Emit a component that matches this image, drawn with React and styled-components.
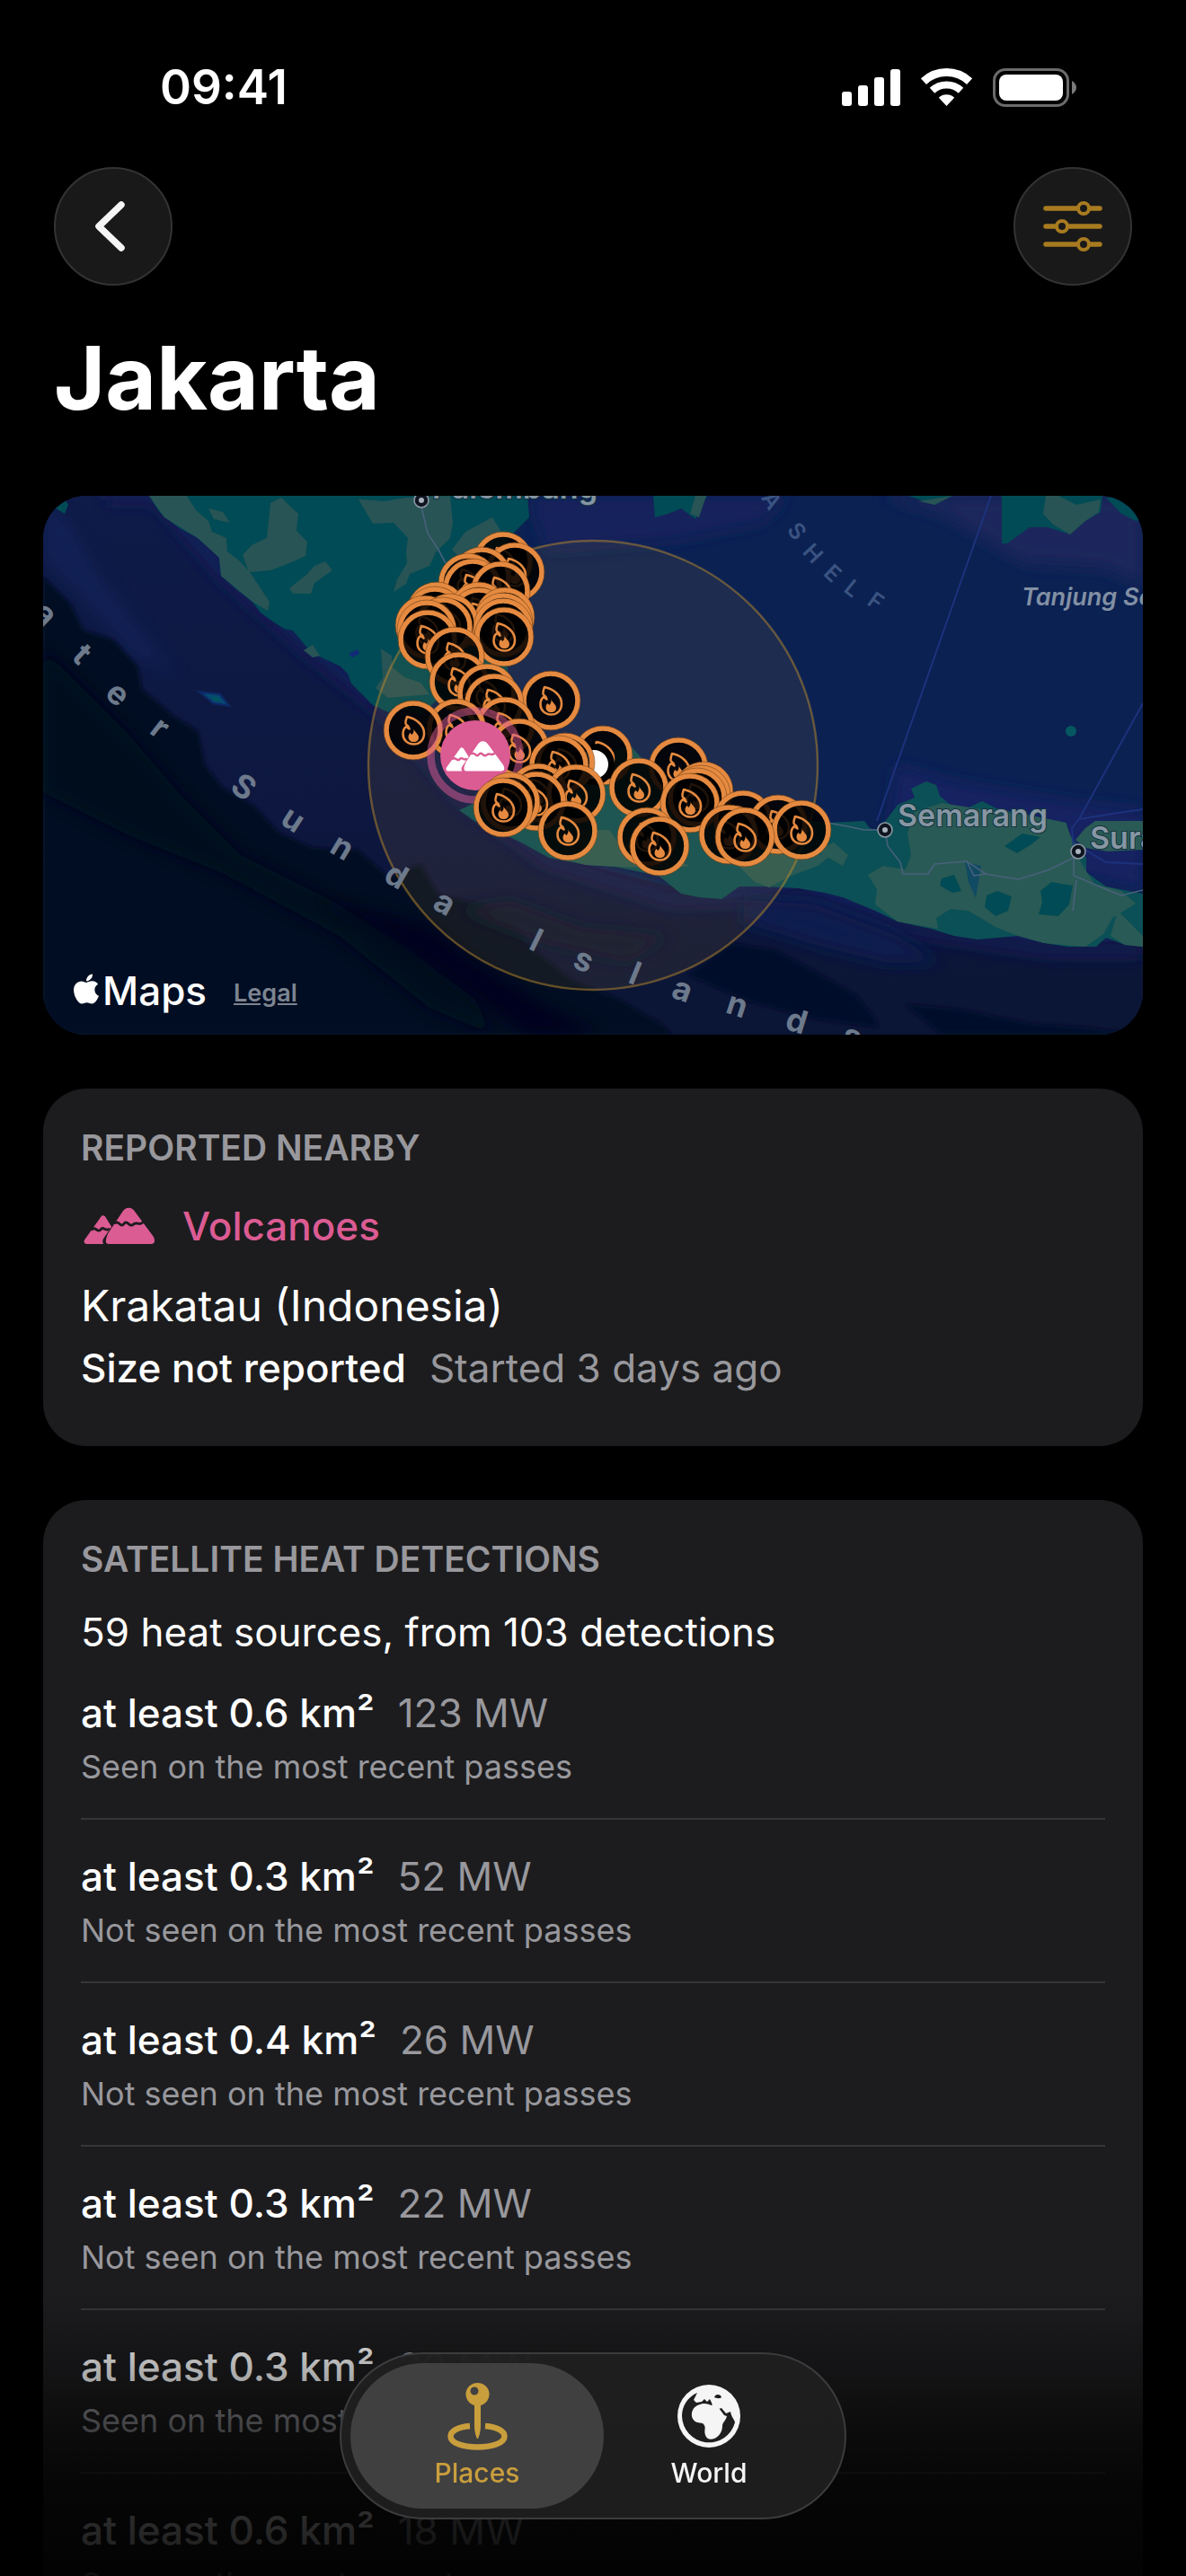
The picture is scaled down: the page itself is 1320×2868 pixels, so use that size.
import { useState } from 'react'
import styled, { createGlobalStyle } from 'styled-components'
import { FaApple } from 'react-icons/fa'

const detections = [
    { id: 1, area: '0.6', power: 123, recent: true },
    { id: 2, area: '0.3', power: 52, recent: false },
    { id: 3, area: '0.4', power: 26, recent: false },
    { id: 4, area: '0.3', power: 22, recent: false },
    { id: 5, area: '0.3', power: 20, recent: true },
    { id: 6, area: '0.6', power: 18, recent: true },
]

// heat sources on the map, north to south, split where the volcano and the centre dot sit
const firesNorth = [
    [512, 73], [525, 85], [488, 90], [473, 97], [478, 103], [509, 106],
    [438, 129], [485, 129], [436, 134], [485, 135], [514, 135], [512, 141], [452, 142],
    [425, 144], [445, 146], [512, 147], [427, 149], [513, 157], [428, 160],
    [458, 179], [463, 207], [494, 220], [565, 228], [502, 231],
    [514, 257], [460, 259], [412, 261], [530, 281], [623, 289],
]

const firesSouth = [
    [581, 297], [574, 300], [707, 302], [663, 325], [735, 329], [551, 331], [732, 333],
    [593, 332], [728, 336], [549, 340], [520, 341], [720, 342], [512, 347],
    [779, 361], [818, 366], [844, 372], [584, 373], [763, 377], [781, 380],
    [672, 380], [686, 390],
]

// x, y, rotation
const islandLetters = [
    ['a', 1, 133, 44], ['t', 42, 178, 43], ['e', 82, 222, 42], ['r', 129, 260, 38],
    ['S', 222, 326, 35], ['u', 277, 362, 33], ['n', 332, 393, 31], ['d', 392, 425, 30], ['a', 446, 455, 29],
    ['I', 548, 497, 26], ['s', 601, 519, 24], ['l', 658, 534, 22], ['a', 711, 552, 20], ['n', 772, 569, 18],
    ['d', 838, 587, 17], ['s', 900, 604, 15],
]

const shelfLetters = [
    ['A', 811, 5, 58], ['S', 839, 39, 52], ['H', 857, 64, 47], ['E', 879, 86, 43], ['L', 901, 103, 39], ['F', 927, 117, 35],
]

const Volcano = ({ cut }) => (
    <svg viewBox='0 0 66 34' aria-hidden='true'>
        <g fill='currentColor' stroke='currentColor' strokeWidth='5' strokeLinejoin='round'>
            <path d='M3 31 L18 10 L31 31Z' />
            <path d='M22 31 L41 3 L63 31Z' stroke={cut} strokeWidth='9' />
            <path d='M23 31 C23 28 24 26 26 23 L38 5 C40 2 43 2 45 5 L62 28 C63 30 63 31 62 31Z' />
        </g>
        <rect y='34' width='66' height='8' fill={cut} />
        <g fill='none' stroke={cut} strokeWidth='2.4' strokeLinecap='round' strokeLinejoin='round'>
            <path d='M8 20 C11 17 13 24 16 20 C18 17 20 22 23 20' />
            <path d='M29 14 C33 12 34 19 37 15 C40 11 42 18 45 16 C49 12 50 17 54 14' />
        </g>
    </svg>
)

const Fire = ({ x, y }) => (
    <g transform={`translate(${x} ${y})`}>
        <circle r='30' fill='#000' fillOpacity='.86' stroke='#e58a40' strokeWidth='5.6' />
        <circle r='33' fill='none' stroke='#7a4417' strokeWidth='.6' />
        <path
            d='M-7 -15 C3 -13 12 -6 12 3.5 C12 11 7 15.5 .5 15.5 C-7 15.5 -11.5 10.5 -11.5 4 C-11.5 1 -10.5 -2 -8 -4 L-4.5 -1.5 C-5 -4 -5.5 -5 -8 -6.5 C-9.5 -8 -8 -12 -7 -15Z'
            fill='none'
            stroke='#e58a40'
            strokeWidth='2.6'
            strokeLinejoin='round'
        />
        <path
            d='M.5 -2 C1 2 6 4 6 8 C6 11 4 13 .5 13 C-3 13 -5.5 11 -5.5 7.5 C-5.5 5.5 -4.5 4 -3.5 3 L-1.5 5 C0 3 1 1 .5 -2Z'
            fill='#e58a40'
        />
    </g>
)

const City = ({ x, y }) => (
    <g transform={`translate(${x} ${y})`}>
        <circle r='8' fill='#10161f' stroke='#8b97a5' strokeWidth='1.6' />
        <circle r='3' fill='#a9b4c0' />
    </g>
)

const RegionMap = () => (
    <svg viewBox='0 0 1224 600' preserveAspectRatio='xMidYMid slice' role='img' aria-label='Map of the Jakarta region'>
        <defs>
            <filter id='soft' x='-20%' y='-20%' width='140%' height='140%'>
                <feGaussianBlur stdDeviation='9' />
            </filter>
            <filter id='edge'>
                <feGaussianBlur stdDeviation='2' />
            </filter>
            <linearGradient id='south' x1='0' y1='0' x2='0' y2='1'>
                <stop offset='0' stopColor='#0f1b48' />
                <stop offset='.6' stopColor='#0d173f' />
                <stop offset='1' stopColor='#0b1534' />
            </linearGradient>
        </defs>
        <rect width='1224' height='600' fill='#0b2152' />
        <g filter='url(#soft)'>
            <path d='M540 0 L830 0 L800 30 L700 50 L560 60Z' fill='#14205c' />
            <path d='M930 0 L1224 0 L1224 100 L1180 80 L1090 75 L1000 20Z' fill='#1b255c' />
            <path d='M950 300 L1020 320 L1140 340 L1224 350 L1224 440 L940 370Z' fill='#122362' />
        </g>
        {/* Indian Ocean */}
        <path d='M0 0 L118 0 L198 89 L298 174 L384 241 L480 300 L480 360 L604 411 L755 449 L841 437 L951 474 L1114 498 L1224 495 L1224 600 L0 600Z' fill='url(#south)' />
        <path
            d='M70 0 L125 0 L205 92 L300 176 L384 243 L470 340 L560 405 L700 450 L850 445 L960 482 L1120 505 L1224 505'
            fill='none'
            stroke='#121e58'
            strokeWidth='14'
            filter='url(#soft)'
        />
        <path d='M0 0 L30 30 L60 85 L110 150 L150 200 L100 180 L40 110 L0 70Z' fill='#14296a' opacity='.4' filter='url(#soft)' />
        <path d='M780 450 L860 455 L950 490 L1000 520 L940 520 L860 500 L780 475Z' fill='#0e1f50' filter='url(#soft)' />
        <path
            d='M0 90 L30 120 L45 150 L78 160 L105 190 L110 215 L145 245 L172 262 L180 300 L200 325 L235 345 L262 375 L300 392 L350 394 L385 425 L420 410 L440 445 L490 455 L520 470 L545 505 L590 540 L640 560 L690 590 L700 600 L0 600Z'
            fill='#000c23'
            filter='url(#edge)'
        />
        <path d='M0 170 L90 260 L150 330 L220 400 L320 450 L400 500 L480 560 L500 600 L430 570 L330 490 L200 420 L100 380 L0 330Z' fill='#010d1c' filter='url(#soft)' />
        <path d='M300 450 L360 462 L430 480 L480 520 L560 570 L620 600 L540 600 L430 520 L360 475Z' fill='#01031c' filter='url(#soft)' />
        <path d='M718 534 L745 512 L767 498 L816 506 L860 530 L881 542 L905 556 L926 582 L930 592 L857 582 L783 562Z' fill='#000c2a' filter='url(#edge)' />
        <path d='M959 566 L1020 572 L1100 588 L1160 592 L1224 600 L1000 600Z' fill='#010e2b' filter='url(#edge)' />
        <path d='M460 460 L520 450 L600 480 L700 490 L650 520 L560 500Z' fill='#0a1530' filter='url(#soft)' />

        {/* Sumatra */}
        <path
            d='M118 0 L128 16 L135 24 L152 36 L172 47 L188 60 L196 69 L198 89 L215 104 L233 118 L242 130 L253 138 L268 148 L278 150 L288 162 L298 174 L314 182 L331 190 L339 198 L343 209 L356 222 L367 233 L384 241 L400 236 L420 244 L441 225 L460 250 L482 241 L510 235 L518 209 L516 178 L526 140 L530 107 L522 80 L518 47 L541 24 L539 0Z'
            fill='#004b55'
        />
        <g fill='#285455'>
            <path d='M118 0 L160 0 L170 16 L184 28 L188 40 L204 47 L205 62 L218 72 L230 85 L240 100 L252 118 L250 128 L233 118 L198 89 L196 69 L172 47 L135 24Z' />
            <path d='M253 8 L265 2 L284 20 L282 39 L294 51 L292 67 L274 75 L253 83 L229 85 L222 66 L232 55 L249 47Z' />
            <path d='M184 14 L200 18 L208 30 L190 26Z' />
            <path d='M274 103 L294 87 L302 78 L314 73 L322 83 L302 97 L298 109 L278 109Z' />
            <path d='M351 4 L380 6 L404 2 L453 0 L456 30 L453 47 L437 63 L430 78 L408 87 L404 98 L390 107 L394 93 L405 75 L404 63 L406 47 L390 30 L367 31Z' />
            <path d='M470 40 L500 24 L516 50 L500 80 L470 75 L455 60Z' />
            <path d='M376 170 L388 178 L388 190 L402 202 L420 208 L430 221 L384 225 L370 214 L378 202Z' />
            <path d='M290 172 L300 166 L308 178 L300 180Z' />
        </g>
        <path d='M12 4 L24 3 L28 10 L24 20 L14 14Z' fill='#004b55' />
        <path d='M178 220 L196 222 L204 232 L190 230Z' fill='#00565c' stroke='#0c3a86' strokeWidth='5' strokeOpacity='.5' />
        <path d='M340 176 L350 171 L352 176 L344 180Z' fill='#122b78' />

        {/* Java, Madura */}
        <path
            d='M463 350 L480 342 L530 330 L600 300 L653 277 L673 300 L720 330 L800 355 L873 364 L914 362 L920 370 L928 372 L939 360 L951 344 L970 336 L966 326 L983 318 L994 322 L998 334 L1012 346 L1030 347 L1045 340 L1061 348 L1100 356 L1139 364 L1142 376 L1147 383 L1161 403 L1161 419 L1183 435 L1224 443 L1224 502 L1204 500 L1183 492 L1172 502 L1140 502 L1114 498 L1085 490 L1040 494 L1014 490 L988 482 L951 474 L926 462 L890 447 L870 442 L841 437 L804 435 L775 435 L755 449 L730 447 L710 443 L685 423 L636 413 L604 411 L563 403 L530 385 L480 362Z'
            fill='#0b5056'
        />
        <path d='M1149 383 L1160 370 L1171 362 L1224 362 L1224 394 L1185 396 L1160 392Z' fill='#2a5a55' />
        <g fill='#2a5a55'>
            <path d='M598 372 L630 372 L640 386 L690 400 L720 412 L700 415 L640 413 L604 411 L570 402Z' />
            <path d='M745 400 L800 395 L840 402 L880 398 L862 412 L830 424 L808 436 L792 430 L770 408Z' />
            <path d='M860 395 L880 386 L896 400 L890 412Z' />
            <path d='M970 352 L1000 342 L1050 350 L1100 356 L1138 364 L1146 385 L1156 410 L1170 432 L1200 440 L1216 454 L1190 470 L1180 488 L1160 502 L1114 498 L1085 490 L1060 480 L1030 462 L1010 460 L994 470 L996 482 L951 474 L926 455 L928 438 L918 422 L935 412 L960 416 L966 400 L962 375Z' />
            <path d='M1196 462 L1224 490 L1224 502 L1204 500 L1188 490Z' />
        </g>
        <g fill='#004b55'>
            <path d='M1000 426 L1014 422 L1022 440 L1012 442 L998 434Z' />
            <path d='M1050 445 L1062 440 L1078 446 L1074 462 L1060 468 L1048 458Z' />
            <path d='M1110 440 L1122 430 L1146 434 L1142 455 L1130 468 L1108 466 L1112 452Z' />
            <path d='M1070 390 L1090 376 L1110 380 L1100 388 L1084 398Z' />
            <path d='M1026 408 L1044 412 L1038 448 L1030 430Z' fill='#104a63' />
        </g>

        {/* Belitung, Borneo */}
        <g fill='#004b55'>
            <path d='M679 0 L681 24 L696 20 L710 14 L726 26 L739 0Z' />
            <path d='M963 0 L992 10 L1012 0Z' />
            <path d='M1067 0 L1067 53 L1073 53 L1098 35 L1118 35 L1143 43 L1160 28 L1177 18 L1179 0Z' />
            <path d='M1183 2 L1200 20 L1216 28 L1224 26 L1224 0Z' />
        </g>
        <g fill='#285455'>
            <path d='M726 0 L720 20 L730 24 L738 0Z' />
            <path d='M1116 0 L1113 20 L1124 32 L1143 43 L1160 28 L1175 18 L1177 4 L1150 10 L1130 0Z' />
            <path d='M975 6 L992 10 L1012 0 L1000 2Z' />
        </g>
        <circle cx='1144' cy='262' r='6' fill='#05585f' />

        <g fill='none' stroke='#1d327c' strokeWidth='2'>
            <path d='M1055 0 L928 362' />
            <path d='M1224 231 L1153 360 L1145 370 L1147 391' />
            <path d='M1153 360 L1190 354 L1224 349' />
            <path d='M1161 395 L1183 408 L1224 410' />
        </g>
        <g fill='none' stroke='#48617c' strokeWidth='1.6'>
            <path d='M421 12 L428 42 L440 60 L448 75' />
            <path d='M873 364 L895 368 L914 372 L937 372 L940 390 L954 408 L957 421 L985 421 L992 410 L1028 407 L1049 421 L1085 427 L1118 417 L1147 403' />
            <path d='M1028 407 L1036 423 L1049 421 M1147 403 L1147 423 L1183 438 L1200 445 L1224 439 M1150 428 L1146 462' />
        </g>

        <circle cx='612' cy='300' r='250' fill='#b98a35' fillOpacity='.11' stroke='#b98a2c' strokeOpacity='.5' strokeWidth='2.5' />

        <MapText x='433' y='3'>Palembang</MapText>
        <City x='421' y='5' />
        <MapText x='951' y='368'>Semarang</MapText>
        <City x='937' y='372' />
        <MapText x='1165' y='393'>Surabaya</MapText>
        <City x='1152' y='396' />
        <CapeText x='1089' y='122'>Tanjung Selatan</CapeText>
        {islandLetters.map(([letter, x, y, angle]) => (
            <IslandText key={x} transform={`translate(${x} ${y}) rotate(${angle})`} y='10'>{letter}</IslandText>
        ))}
        {shelfLetters.map(([letter, x, y, angle]) => (
            <ShelfText key={x} transform={`translate(${x} ${y}) rotate(${angle})`} y='9'>{letter}</ShelfText>
        ))}

        {firesNorth.map(([x, y]) => <Fire key={`${x}-${y}`} x={x} y={y} />)}
        <g transform='translate(481 289)' color='#fff'>
            <circle r='49.5' fill='none' stroke='#db5b93' strokeOpacity='.5' strokeWidth='8.5' />
            <circle r='39' fill='#db5b93' />
            <svg x='-33' y='-16' width='66' height='34'>
                <Volcano cut='#db5b93' />
            </svg>
        </g>
        <circle cx='613' cy='299' r='19.5' fill='#fff' stroke='#000' strokeWidth='7' />
        {firesSouth.map(([x, y]) => <Fire key={`${x}-${y}`} x={x} y={y} />)}
    </svg>
)

const StatusIcons = () => (
    <Indicators>
        <svg width='65' height='41' viewBox='0 0 65 41' fill='#fff' aria-hidden='true'>
            <rect y='25' width='11' height='16' rx='3' />
            <rect x='18' y='18' width='11' height='23' rx='3' />
            <rect x='36' y='9' width='11' height='32' rx='3' />
            <rect x='54' width='11' height='41' rx='3' />
        </svg>
        <svg width='57' height='42' viewBox='0 0 57 42' fill='none' stroke='#fff' aria-hidden='true'>
            <path d='M2.9 14.6 A37.5 37.5 0 0 1 54.1 14.6' strokeWidth='9' />
            <path d='M12.5 24.8 A23.5 23.5 0 0 1 44.5 24.8' strokeWidth='8' />
            <path d='M28.5 42 L19.8 32.7 A13 13 0 0 1 37.2 32.7Z' fill='#fff' stroke='none' />
        </svg>
        <svg width='93' height='43' viewBox='0 0 93 43' aria-hidden='true'>
            <rect x='1.5' y='1.5' width='82' height='40' rx='12.5' fill='none' stroke='#6b6b6b' strokeWidth='3' />
            <rect x='7' y='7' width='71' height='29' rx='8' fill='#fff' />
            <path d='M88 14 C91 16 93 18 93 21.5 S91 27 88 29Z' fill='#7a7a7a' />
        </svg>
    </Indicators>
)

const PinIcon = () => (
    <svg width='67' height='75' viewBox='0 0 67 75' aria-hidden='true'>
        <path
            d='M33.5 0 A12.7 12.7 0 0 1 37 25 L37 48 C37 54 35 61 33.5 62.5 C32 61 30 54 30 48 L30 25 A12.7 12.7 0 0 1 33.5 0Z M30 4.5 A4.5 4.5 0 1 0 30 13.5 A4.5 4.5 0 1 0 30 4.5Z'
            fill='currentColor'
            fillRule='evenodd'
        />
        <path
            d='M25 48 C12 49 3.5 53.5 3.5 59.5 C3.5 67 17 71.5 33.5 71.5 S63.5 67 63.5 59.5 C63.5 53.5 55 49 42 48'
            fill='none'
            stroke='currentColor'
            strokeWidth='6.5'
        />
    </svg>
)

const GlobeIcon = () => (
    <svg width='70' height='70' viewBox='0 0 70 70' aria-hidden='true'>
        <circle cx='35' cy='35' r='35' fill='currentColor' />
        <path
            d='M22 9 C11 14 5 24 5 35 A30 30 0 0 0 64 42 C63 38 60 36 59 30 L54 32 L49 26 L46 27 L39 24 L38 20 L36 16 L33 19 L30 16 L27 19 L21 20 L18 17 Z'
            fill='#1e1e1f'
        />
        <path
            d='M25 22 C29 20 33 21 38 23 C42 22 44 23 46 26 L52 34 L55 35 C54 40 50 42 50 46 C50 54 44 59 41 60 C36 62 32 60 31 56 C29 50 33 47 28 43 C24 42 20 43 17 38 C14 32 17 24 25 22Z'
            fill='currentColor'
        />
        <path d='M41 14 C42 10 48 10 49 14 C47 16 43 15 41 14Z' fill='#1e1e1f' />
    </svg>
)

const App = () => {
    const [tab, setTab] = useState('places')

    return (
        <Screen>
            <GlobalStyle />
            <StatusBar>
                <Clock>09:41</Clock>
                <StatusIcons />
            </StatusBar>
            <Toolbar>
                <RoundButton aria-label='Back'>
                    <svg width='42' height='56' viewBox='0 0 42 56' fill='none' aria-hidden='true'>
                        <path d='M30 4 L5 28 L30 52' stroke='#f5f5f5' strokeWidth='7.5' strokeLinecap='round' strokeLinejoin='round' />
                    </svg>
                </RoundButton>
                <RoundButton aria-label='Filters'>
                    <svg width='66' height='56' viewBox='0 0 66 56' fill='none' stroke='#a87b20' aria-hidden='true'>
                        <path d='M3 8 H37 M53 8 H63 M3 28 H13 M29 28 H63 M3 48 H37 M53 48 H63' strokeWidth='5.5' strokeLinecap='round' />
                        <g strokeWidth='4'>
                            <circle cx='45' cy='8' r='6' />
                            <circle cx='21' cy='28' r='6' />
                            <circle cx='45' cy='48' r='6' />
                        </g>
                    </svg>
                </RoundButton>
            </Toolbar>
            <Title>Jakarta</Title>

            <Content>
                <MapCard>
                    <RegionMap />
                    <Attribution>
                        <Brand><FaApple aria-hidden='true' />Maps</Brand>
                        <LegalLink href='#legal'>Legal</LegalLink>
                    </Attribution>
                </MapCard>

                <Card>
                    <CardHeading>REPORTED NEARBY</CardHeading>
                    <Category>
                        <Volcano cut='#1c1c1e' />
                        Volcanoes
                    </Category>
                    <EventName>Krakatau (Indonesia)</EventName>
                    <EventFacts>
                        <Strong>Size not reported</Strong>
                        <Muted>Started 3 days ago</Muted>
                    </EventFacts>
                </Card>

                <Card>
                    <CardHeading>SATELLITE HEAT DETECTIONS</CardHeading>
                    <Summary>59 heat sources, from 103 detections</Summary>
                    <List>
                        {detections.map(item => (
                            <Row key={item.id}>
                                <Facts>
                                    <Strong>at least {item.area} km²</Strong>
                                    <Muted>{item.power} MW</Muted>
                                </Facts>
                                <Caption>{item.recent ? 'Seen' : 'Not seen'} on the most recent passes</Caption>
                            </Row>
                        ))}
                    </List>
                </Card>
            </Content>

            <Footer>
                <TabBar>
                    <Tab $active={tab === 'places'} onClick={() => setTab('places')}>
                        <TabIcon><PinIcon /></TabIcon>
                        Places
                    </Tab>
                    <Tab $active={tab === 'world'} onClick={() => setTab('world')}>
                        <TabIcon><GlobeIcon /></TabIcon>
                        World
                    </Tab>
                </TabBar>
            </Footer>
        </Screen>
    )
}

const GlobalStyle = createGlobalStyle`
    * {
        box-sizing: border-box;
    }

    body {
        margin: 0;
        background: #000;
        color: #fff;
        font-family: Inter, 'Liberation Sans', sans-serif;
    }

    button {
        font-family: inherit;
        cursor: pointer;
    }
`;
const Screen = styled.main`
    position: relative;
    display: flex;
    flex-direction: column;
    height: 100vh;
    overflow: hidden;
    background: #000;
`;
const StatusBar = styled.div`
    display: flex;
    justify-content: space-between;
    align-items: center;
    flex-shrink: 0;
    height: 66px;
    margin: 64px 122px 56px 178px;
`;
const Clock = styled.time`
    font-size: 53px;
    font-weight: 600;
    line-height: 66px;
`;
const Indicators = styled.div`
    display: flex;
    align-items: center;
    gap: 23px;
`;
const Toolbar = styled.nav`
    display: flex;
    justify-content: space-between;
    flex-shrink: 0;
    padding: 0 60px;
`;
const RoundButton = styled.button`
    display: flex;
    align-items: center;
    justify-content: center;
    width: 132px;
    height: 132px;
    padding: 0;
    border: 2px solid #333334;
    border-radius: 50%;
    background: #191919;
`;
const Title = styled.h1`
    flex-shrink: 0;
    margin: 41px 60px 70px;
    font-size: 98px;
    font-weight: 700;
    line-height: 123px;
`;
const Content = styled.div`
    display: flex;
    flex-direction: column;
    flex: 1;
    gap: 60px;
    min-height: 0;
    padding: 0 48px;
    overflow-y: auto;
    scrollbar-width: none;

    > * {
        flex-shrink: 0;
    }
`;
const MapCard = styled.section`
    position: relative;
    height: 600px;
    border-radius: 48px;
    overflow: hidden;

    > svg {
        display: block;
        width: 100%;
        height: 100%;
    }
`;
const MapText = styled.text`
    fill: #8796a3;
    font-size: 34px;
    font-weight: 600;
    paint-order: stroke;
    stroke: #12343f;
    stroke-width: 2px;
`;
const CapeText = styled.text`
    fill: #8290a4;
    font-size: 27px;
    font-style: italic;
    font-weight: 600;
`;
const IslandText = styled.text`
    fill: #6d7a8c;
    font-size: 36px;
    font-weight: 700;
    text-anchor: middle;
`;
const ShelfText = styled.text`
    fill: #3a5381;
    font-size: 25px;
    font-weight: 600;
    text-anchor: middle;
`;
const Attribution = styled.div`
    position: absolute;
    left: 30px;
    bottom: 22px;
    display: flex;
    align-items: flex-end;
    gap: 30px;
`;
const Brand = styled.span`
    display: flex;
    align-items: center;
    font-size: 44px;
    font-weight: 500;
    line-height: 54px;

    svg {
        width: 36px;
        height: 38px;
        margin-bottom: 4px;
    }
`;
const LegalLink = styled.a`
    color: #7d8591;
    font-size: 27px;
    font-weight: 600;
    line-height: 48px;
`;
const Card = styled.section`
    padding: 39px 42px 24px;
    border-radius: 48px;
    background: #1c1c1e;
`;
const CardHeading = styled.h2`
    margin: 0;
    color: #98989d;
    font-size: 39px;
    font-weight: 600;
    line-height: 54px;
`;
const Category = styled.div`
    display: flex;
    align-items: center;
    gap: 30px;
    margin: 30px 0 0 3px;
    color: #db5b93;
    font-size: 44px;
    font-weight: 500;
    line-height: 60px;

    svg {
        width: 80px;
        height: 42px;
    }
`;
const EventName = styled.h3`
    margin: 26px 0 6px;
    font-size: 48px;
    font-weight: 400;
    line-height: 66px;
`;
const Facts = styled.div`
    display: flex;
    gap: 26px;
    font-size: 44px;
    line-height: 60px;
`;
const EventFacts = styled(Facts)`
    padding-bottom: 33px;
`;
const Strong = styled.span`
    font-weight: 500;
`;
const Muted = styled.span`
    color: #98989d;
`;
const Summary = styled.p`
    margin: 24px 0 0;
    font-size: 44px;
    line-height: 60px;
`;
const List = styled.ul`
    margin: 0;
    padding: 0;
    list-style: none;
`;
const Row = styled.li`
    padding: 33px 0;

    &:first-child {
        padding-top: 30px;
    }

    & + & {
        border-top: 2px solid #363638;
    }
`;
const Caption = styled.p`
    margin: 6px 0 0;
    color: #98989d;
    font-size: 36px;
    line-height: 48px;
`;
const Footer = styled.footer`
    position: absolute;
    right: 0;
    bottom: 0;
    left: 0;
    display: flex;
    justify-content: center;
    padding: 70px 0 63px;
    background: linear-gradient(
        to bottom,
        rgba(0, 0, 0, 0),
        rgba(0, 0, 0, 0.35) 32%,
        rgba(0, 0, 0, 0.6) 50%,
        rgba(0, 0, 0, 0.8) 70%,
        rgba(0, 0, 0, 0.9)
    );
`;
const TabBar = styled.nav`
    display: flex;
    padding: 10px;
    border: 2px solid #3c3c3e;
    border-radius: 93px;
    background: rgba(31, 31, 32, 0.92);
    backdrop-filter: blur(16px);
`;
const Tab = styled.button`
    display: flex;
    flex-direction: column;
    align-items: center;
    gap: 6px;
    width: 282px;
    height: 162px;
    padding: 20px 0 0;
    border: none;
    border-radius: 81px;
    background: ${props => props.$active ? '#404041' : 'transparent'};
    color: ${props => props.$active ? '#c99e3c' : '#f5f5f5'};
    font-size: 30px;
    font-weight: 500;
    line-height: 36px;

    & + & {
        margin-left: -24px;
    }
`;
const TabIcon = styled.span`
    display: flex;
    align-items: center;
    height: 78px;
`;

export default App
